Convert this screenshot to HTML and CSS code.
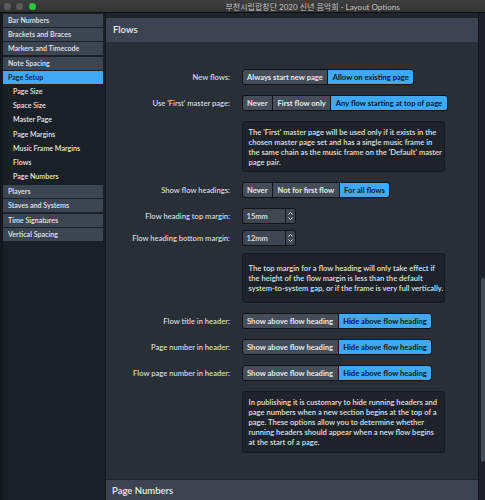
FILE: index.html
```html
<!DOCTYPE html>
<html lang="en">
<head>
  <meta charset="UTF-8">
  <title>Layout Options</title>
  <link rel="stylesheet" href="styles.css">
</head>
<body>
  <header class="titlebar">
    <span class="lights"><i class="light"></i><i class="light"></i><i class="light green"></i></span>
    <span class="title">부천시립합창단 2020 신년 음악회 - Layout Options</span>
  </header>

  <div class="window">
    <nav class="sidebar">
      <div class="item">Bar Numbers</div>
      <div class="item">Brackets and Braces</div>
      <div class="item">Markers and Timecode</div>
      <div class="item">Note Spacing</div>
      <div class="item active">Page Setup</div>
      <div class="sub">Page Size</div>
      <div class="sub">Space Size</div>
      <div class="sub">Master Page</div>
      <div class="sub">Page Margins</div>
      <div class="sub">Music Frame Margins</div>
      <div class="sub">Flows</div>
      <div class="sub last">Page Numbers</div>
      <div class="item">Players</div>
      <div class="item">Staves and Systems</div>
      <div class="item">Time Signatures</div>
      <div class="item">Vertical Spacing</div>
    </nav>

    <main class="content">
      <section class="panel">
        <h2 class="panel-head">Flows</h2>
        <div class="panel-body">
          <div class="row">
            <label>New flows:</label>
            <div class="seg"><span>Always start new page</span><span class="on">Allow on existing page</span></div>
          </div>
          <div class="row">
            <label>Use 'First' master page:</label>
            <div class="seg"><span>Never</span><span>First flow only</span><span class="on">Any flow starting at top of page</span></div>
          </div>
          <div class="note">
            <p>The 'First' master page will be used only if it exists in the<br>chosen master page set and has a single music frame in<br>the same chain as the music frame on the 'Default' master<br>page pair.</p>
          </div>
          <div class="row">
            <label>Show flow headings:</label>
            <div class="seg"><span>Never</span><span>Not for first flow</span><span class="on">For all flows</span></div>
          </div>
          <div class="row">
            <label>Flow heading top margin:</label>
            <div class="spin"><span class="val">15mm</span><span class="arrows"><svg width="7" height="12" viewBox="0 0 7 12"><path d="M1.5 4.5 L3.5 2.5 L5.5 4.5 M1.5 7.5 L3.5 9.5 L5.5 7.5" fill="none" stroke="#dfe3e7" stroke-width="1"/></svg></span></div>
          </div>
          <div class="row tight">
            <label>Flow heading bottom margin:</label>
            <div class="spin"><span class="val">12mm</span><span class="arrows"><svg width="7" height="12" viewBox="0 0 7 12"><path d="M1.5 4.5 L3.5 2.5 L5.5 4.5 M1.5 7.5 L3.5 9.5 L5.5 7.5" fill="none" stroke="#dfe3e7" stroke-width="1"/></svg></span></div>
          </div>
          <div class="note after-tight">
            <p>The top margin for a flow heading will only take effect if<br>the height of the flow margin is less than the default<br>system-to-system gap, or if the frame is very full vertically.</p>
          </div>
          <div class="row">
            <label>Flow title in header:</label>
            <div class="seg"><span>Show above flow heading</span><span class="on">Hide above flow heading</span></div>
          </div>
          <div class="row">
            <label>Page number in header:</label>
            <div class="seg"><span>Show above flow heading</span><span class="on">Hide above flow heading</span></div>
          </div>
          <div class="row">
            <label>Flow page number in header:</label>
            <div class="seg"><span>Show above flow heading</span><span class="on">Hide above flow heading</span></div>
          </div>
          <div class="note">
            <p>In publishing it is customary to hide running headers and<br>page numbers when a new section begins at the top of a<br>page. These options allow you to determine whether<br>running headers should appear when a new flow begins<br>at the start of a page.</p>
          </div>
        </div>
      </section>
      <h2 class="panel-head next">Page Numbers</h2>
    </main>

    <div class="scrollbar"><div class="thumb"></div></div>
  </div>
</body>
</html>
```

FILE: styles.css
```css
:root {
  --bg: #1b2027;
  --panel: #2a2f37;
  --head: #3b4450;
  --item: #3c4652;
  --btn: #444d58;
  --blue: #3fa9f5;
  --text: #dfe3e7;
  --dark: #111418;
  --note: #1f2329;
}
*, *::before, *::after { box-sizing: border-box; }
body {
  margin:0;
  width:485px; height:500px;
  overflow:hidden;
  background:var(--bg);
  color:var(--text);
  font-family:Lato,"Noto Sans",sans-serif;
}

/* window chrome */
.titlebar {
  height:13px;
  display:flex; align-items:center;
  background:linear-gradient(#3e3e3e,#333);
  border-bottom:1px solid #0e0f11;
}
.lights { display:flex; gap:5.5px; padding-left:3.5px; }
.light {
  width:7px; height:7px; border-radius:50%;
  background:#5b5b5d;
}
.light.green { background:#2bc940; }
.title {
  margin-left:190px;
  font-size:8px;
  color:#c4c4c4;
  font-family:Lato,"Noto Sans CJK KR",sans-serif;
  white-space:nowrap;
}

.window { display:flex; height:487px; }

/* left list */
.sidebar {
  width:105px;
  padding:1px 2px 0 0;
  background:var(--bg);
  border-left:3px solid #14171b;
  font-size:7.1px;
  font-weight:600;
}
.sidebar .item {
  height:13px; line-height:13px;
  margin-bottom:1.2px;
  padding-left:5px;
  background:var(--item);
  color:#e3e6e9;
  white-space:nowrap;
}
.sidebar .item.active { background:var(--blue); color:#0d1620; }
.sidebar .sub {
  height:14.2px; line-height:14.2px;
  padding-left:10px;
  color:#e3e6e9;
}
.sidebar .sub.last { margin-bottom:1px; }

/* main panel */
.content {
  flex:1;
  padding-top:5px;
  border-left:1px solid #14171b;
  background:#20252c;
}
.panel-head {
  margin:0;
  height:24px; line-height:24px;
  padding-left:7px;
  background:var(--head);
  font-size:9.5px; font-weight:600;
  color:#e8ebee;
}
.panel-head.next { margin-top:1px; height:20px; line-height:22px; padding-left:6px; }
.panel-body {
  height:437px;
  padding-top:27px;
  background:var(--panel);
  display:flex; flex-direction:column; gap:10px;
  font-size:7.6px;
}

.row {
  display:grid;
  grid-template-columns:124px auto;
  column-gap:11.5px;
  align-items:center;
  height:16px;
}
.row.tight { margin-top:-4px; }
.row label { text-align:right; white-space:nowrap; color:#d6dadf; font-weight:600; }

.seg {
  justify-self:start;
  display:flex;
  height:16px;
  border:1px solid var(--dark);
  border-radius:3px;
  background:var(--dark);
  gap:1px;
  overflow:hidden;
}
.seg span {
  padding:0 4.5px;
  line-height:14px;
  background:var(--btn);
  font-size:7.6px;
  font-weight:bold;
  color:#e6e9ec;
  white-space:nowrap;
}
.seg span.on { background:var(--blue); color:#0b1824; }

.spin {
  justify-self:start;
  display:flex;
  width:54px; height:16px;
  border:1px solid var(--dark);
  border-radius:3px;
  background:var(--dark);
  gap:1px;
  overflow:hidden;
}
.spin .val {
  flex:1;
  padding-left:4px;
  line-height:14px;
  background:#3e4651;
  color:#e6e9ec;
  font-weight:600;
}
.spin .arrows {
  width:9px;
  display:flex; align-items:center; justify-content:center;
  background:#3e4651;
}

.note {
  margin-left:135.5px;
  width:203px; min-height:50px;
  display:flex; align-items:center;
  padding:4.5px 6px;
  background:var(--note);
  border:1px solid #16191d;
  border-radius:3px;
}
.note.after-tight { margin-top:-3px; }
.note p { margin:0; line-height:10.1px; white-space:nowrap; color:#dde1e5; font-weight:600; }

.scrollbar {
  width:7px;
  background:#1d2127;
  border-left:1px solid #111418;
  padding-left:2px;
}
.scrollbar .thumb {
  margin-top:265px;
  width:4px; height:184px;
  border-radius:2px;
  background:#414a55;
}
```
